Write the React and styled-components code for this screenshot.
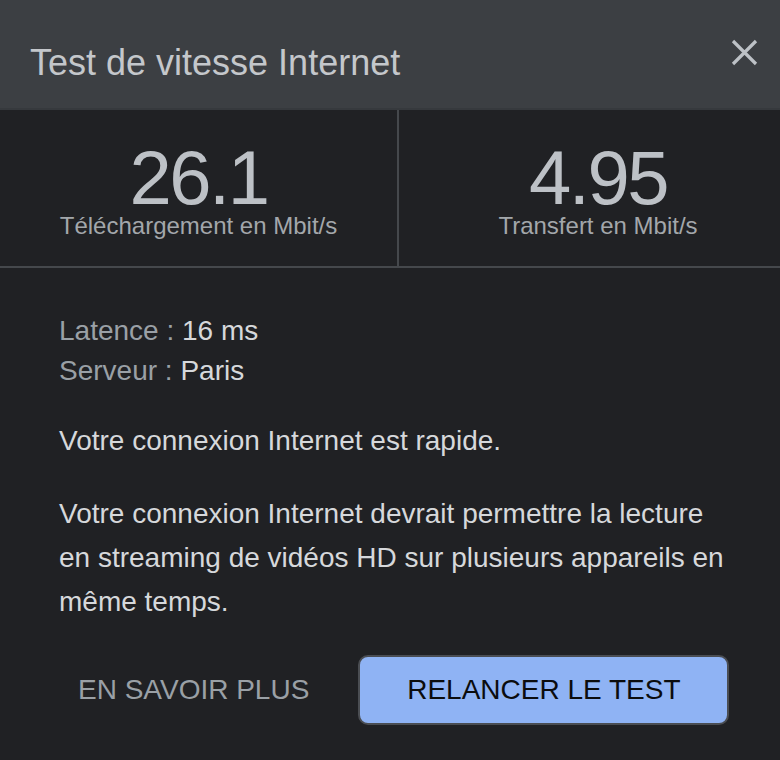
import React from 'react'
import styled, { createGlobalStyle } from 'styled-components'

const GlobalStyle = createGlobalStyle`
    html, body {
        margin: 0;
        padding: 0;
        overflow: hidden;
        background: #202124;
        font-family: "Liberation Sans", Arial, sans-serif;
    }
`
const Dialog = styled.div`
    width: 797px;
    min-height: 760px;
    background: #202124;
    display: flex;
    flex-direction: column;
`
const Header = styled.div`
    height: 110px;
    box-sizing: border-box;
    padding: 43px 39px 0 30px;
    background: #3c3f43;
    border-bottom: 2px solid #36393d;
    display: flex;
    justify-content: space-between;
    align-items: flex-start;
`
const Title = styled.h1`
    margin: 0;
    font-size: 36px;
    line-height: 40px;
    font-weight: 400;
    color: #c4c7cb;
`
const CloseButton = styled.button`
    margin: -4px 0 0;
    padding: 0;
    border: none;
    background: none;
    width: 27px;
    height: 27px;
    cursor: pointer;
    display: flex;
`
const Stats = styled.div`
    display: grid;
    grid-template-columns: 397px 2px 398px;
    border-bottom: 2px solid #45484c;
`
const Divider = styled.div`
    background: #45484c;
`
const Stat = styled.div`
    height: 156px;
    box-sizing: border-box;
    padding-top: 35px;
    display: flex;
    flex-direction: column;
    align-items: center;
`
const StatValue = styled.div`
    font-size: 76px;
    line-height: 66px;
    letter-spacing: -2.5px;
    color: #bdc1c6;
`
const StatLabel = styled.div`
    margin-top: 3px;
    font-size: 24px;
    line-height: 24px;
    color: #a3a7ab;
`
const Body = styled.div`
    padding: 43px 67px 0 59px;
`
const Info = styled.div`
    font-size: 28px;
    line-height: 40px;
`
const InfoKey = styled.span`
    color: #9aa0a6;
`
const InfoValue = styled.span`
    color: #d6d8db;
`
const Text = styled.p`
    margin: ${p => p.top}px 0 0;
    font-size: 28px;
    line-height: 44px;
    color: #d6d8db;
`
const Actions = styled.div`
    margin: 31px 0 0 19px;
    display: flex;
    align-items: center;
    gap: 49px;
`
const LinkButton = styled.button`
    flex-shrink: 0;
    white-space: nowrap;
    padding: 0;
    border: none;
    background: none;
    font-family: inherit;
    font-size: 28px;
    color: #9aa0a6;
    cursor: pointer;
`
const PrimaryButton = styled.button`
    flex-shrink: 0;
    white-space: nowrap;
    width: 371px;
    height: 70px;
    box-sizing: border-box;
    border: 2px solid #4a4d52;
    border-radius: 10px;
    background: #8fb3f4;
    font-family: inherit;
    font-size: 28px;
    color: #0b0c0e;
    cursor: pointer;
    padding: 0;
`

const CloseIcon = () => (
    <svg width="27" height="27" viewBox="0 0 27 27">
        <path d="M2 2 L25 25 M25 2 L2 25" stroke="#bdc1c6" strokeWidth="3.2" strokeLinecap="butt" fill="none" />
    </svg>
)

export default function App() {
    return (
        <Dialog>
            <GlobalStyle />
            <Header>
                <Title>Test de vitesse Internet</Title>
                <CloseButton aria-label="Fermer"><CloseIcon /></CloseButton>
            </Header>
            <Stats>
                <Stat>
                    <StatValue>26.1</StatValue>
                    <StatLabel>Téléchargement en Mbit/s</StatLabel>
                </Stat>
                <Divider />
                <Stat>
                    <StatValue>4.95</StatValue>
                    <StatLabel>Transfert en Mbit/s</StatLabel>
                </Stat>
            </Stats>
            <Body>
                <Info>
                    <div><InfoKey>Latence : </InfoKey><InfoValue>16 ms</InfoValue></div>
                    <div><InfoKey>Serveur : </InfoKey><InfoValue>Paris</InfoValue></div>
                </Info>
                <Text top={28}>Votre connexion Internet est rapide.</Text>
                <Text top={29}>Votre connexion Internet devrait permettre la lecture en streaming de vidéos HD sur plusieurs appareils en même temps.</Text>
                <Actions>
                    <LinkButton>EN SAVOIR PLUS</LinkButton>
                    <PrimaryButton>RELANCER LE TEST</PrimaryButton>
                </Actions>
            </Body>
        </Dialog>
    )
}
